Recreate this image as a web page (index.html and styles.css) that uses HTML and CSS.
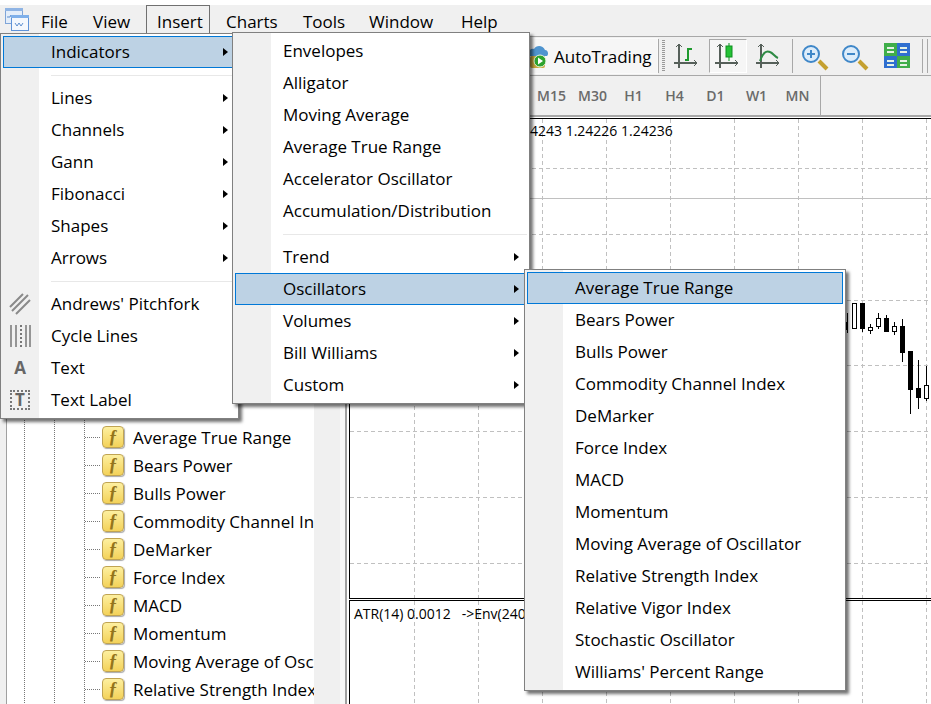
FILE: index.html
```html
<!DOCTYPE html>
<html lang="en">
  <head>
    <meta charset="UTF-8" />
    <title>MetaTrader</title>
    <link rel="stylesheet" href="styles.css">
  </head>

  <body>
    <div class="app">
      <div class="top-strip"></div>

      <div class="menubar">
        <svg class="app-icon" width="26" height="26" viewBox="0 0 26 26">
          <rect x="1.5" y="1.5" width="17" height="15" fill="#e4eefa" stroke="#7fa5d8"/>
          <rect x="1" y="1" width="18" height="3" fill="#8fb4e4"/>
          <path d="M3 10h3l1-2 2 4 1-2h4" fill="none" stroke="#5d8fd0"/>
          <rect x="7.5" y="8.5" width="17" height="15" fill="#f4f8fd" stroke="#5f93d8"/>
          <rect x="7" y="8" width="18" height="3" fill="#7fb0ea"/>
          <path d="M11 16l2 3 2-3 2 3 2-3" fill="none" stroke="#5d8fd0"/>
        </svg>
        <div class="menubar-item">File</div>
        <div class="menubar-item">View</div>
        <div class="menubar-item active">Insert</div>
        <div class="menubar-item">Charts</div>
        <div class="menubar-item">Tools</div>
        <div class="menubar-item">Window</div>
        <div class="menubar-item">Help</div>
      </div>

      <div class="toolbar toolbar-main">
        <div class="auto-trading">
          <svg class="auto-icon" width="22" height="28" viewBox="0 0 22 28">
            <path d="M1 14c-2-5 2-8 5-7 2-4 9-4 11 1 3 0 4 4 2 6z" fill="#4f94cf"/>
            <rect x="2" y="14" width="15" height="12" rx="2" fill="#c9a93f"/>
            <circle cx="12" cy="19" r="6" fill="#2ea32e" stroke="#e8f5e0"/>
            <path d="M10 15.5l5 3.5-5 3.5z" fill="#fff"/>
          </svg>
          <span>AutoTrading</span>
        </div>
        <div class="tool-sep"></div>
        <div class="grip"></div>

        <div class="tool-btn">
          <svg width="32" height="32" viewBox="0 0 32 32">
            <path d="M9 4v24M4 23h23" stroke="#56605a" stroke-width="2" fill="none"/>
            <path d="M6 7l3-3 3 3M24 20l3 3-3 3" stroke="#56605a" fill="none"/>
            <path d="M15 20h3V9h4" stroke="#1f9a2e" stroke-width="2" fill="none"/>
          </svg>
        </div>
        <div class="tool-btn pressed">
          <svg width="32" height="32" viewBox="0 0 32 32">
            <path d="M8 4v24M3 23h23" stroke="#56605a" stroke-width="2" fill="none"/>
            <path d="M5 7l3-3 3 3M23 20l3 3-3 3" stroke="#56605a" fill="none"/>
            <path d="M17 3v18" stroke="#0f8f20"/>
            <rect x="14" y="6" width="6" height="11" fill="#25c236" stroke="#0f8f20"/>
          </svg>
        </div>
        <div class="tool-btn">
          <svg width="32" height="32" viewBox="0 0 32 32">
            <path d="M9 4v24M4 23h23" stroke="#56605a" stroke-width="2" fill="none"/>
            <path d="M6 7l3-3 3 3M24 20l3 3-3 3" stroke="#56605a" fill="none"/>
            <path d="M8 21c3-8 6-11 10-9 3 1 5 5 8 6" stroke="#2e8b45" stroke-width="2" fill="none"/>
          </svg>
        </div>
        <div class="tool-sep spaced"></div>

        <div class="tool-btn">
          <svg width="32" height="32" viewBox="0 0 32 32">
            <path d="M20 21l8 8" stroke="#c4a030" stroke-width="4"/>
            <circle cx="12" cy="14" r="8" fill="#dcecfa" stroke="#3f87c8" stroke-width="2"/>
            <path d="M8 14h8M12 10v8" stroke="#3f87c8" stroke-width="2"/>
          </svg>
        </div>
        <div class="tool-btn">
          <svg width="32" height="32" viewBox="0 0 32 32">
            <path d="M20 21l8 8" stroke="#c4a030" stroke-width="4"/>
            <circle cx="12" cy="14" r="8" fill="#dcecfa" stroke="#3f87c8" stroke-width="2"/>
            <path d="M8 14h8" stroke="#3f87c8" stroke-width="2"/>
          </svg>
        </div>
        <div class="tool-btn tile-btn">
          <svg width="32" height="32" viewBox="0 0 32 32">
            <rect x="3" y="3" width="13" height="13" fill="#3fae4a"/>
            <rect x="16" y="3" width="13" height="13" fill="#2f6fd0"/>
            <rect x="3" y="16" width="13" height="12" fill="#2f6fd0"/>
            <rect x="16" y="16" width="13" height="12" fill="#3fae4a"/>
            <path d="M6 8h7M6 12h7M19 8h7M19 12h7M6 21h7M6 25h7M19 21h7M19 25h7" stroke="#e6f2e6" stroke-width="2"/>
          </svg>
        </div>
        <div class="tool-sep last"></div>
        <div class="tool-sep tail"></div>
      </div>

      <div class="toolbar toolbar-periods">
        <div class="period">M15</div>
        <div class="period">M30</div>
        <div class="period">H1</div>
        <div class="period">H4</div>
        <div class="period">D1</div>
        <div class="period">W1</div>
        <div class="period">MN</div>
        <div class="tool-sep tall"></div>
      </div>

      <div class="workspace">
        <div class="navigator">
          <div class="tree">
            <div class="tree-row"><span class="fn-icon">ƒ</span>Average True Range</div>
            <div class="tree-row"><span class="fn-icon">ƒ</span>Bears Power</div>
            <div class="tree-row"><span class="fn-icon">ƒ</span>Bulls Power</div>
            <div class="tree-row"><span class="fn-icon">ƒ</span>Commodity Channel Index</div>
            <div class="tree-row"><span class="fn-icon">ƒ</span>DeMarker</div>
            <div class="tree-row"><span class="fn-icon">ƒ</span>Force Index</div>
            <div class="tree-row"><span class="fn-icon">ƒ</span>MACD</div>
            <div class="tree-row"><span class="fn-icon">ƒ</span>Momentum</div>
            <div class="tree-row"><span class="fn-icon">ƒ</span>Moving Average of Oscillator</div>
            <div class="tree-row"><span class="fn-icon">ƒ</span>Relative Strength Index</div>
          </div>
          <div class="nav-side"></div>
          <div class="nav-edge"></div>
        </div>

        <div class="chart">
          <div class="pane pane-price">
            <svg class="pane-art" width="581" height="479" viewBox="350 120 581 479">
              <path class="grid" d="M414.5 120V599M478.5 120V599M542.5 120V599M606.5 120V599M670.5 120V599M734.5 120V599M798.5 120V599M862.5 120V599M926.5 120V599"/>
              <path class="grid" d="M350 169.5H931M350 235.5H931M350 301.5H931M350 366.5H931M350 432.5H931M350 498.5H931M350 564.5H931"/>
              <path d="M350 199.5H931" stroke="#c0c0c0" fill="none"/>
              <g class="candles">
                <path d="M847.5 314V334M862.5 304V333M870.5 325V335M878.5 314V330M886.5 316V333M894.5 323V336M902.5 320V363M910.5 352V415M918.5 361V410M926.5 367V402"/>
                <rect class="down" x="846" y="323" width="2" height="8"/>
                <rect class="up" x="852.5" y="304.5" width="4" height="25"/>
                <rect class="down" x="860" y="304" width="5" height="26"/>
                <rect class="up" x="868.5" y="328.5" width="4" height="3"/>
                <rect class="up" x="876.5" y="319.5" width="4" height="8"/>
                <rect class="down" x="884" y="319" width="5" height="14"/>
                <rect class="up" x="892.5" y="327.5" width="4" height="5"/>
                <rect class="down" x="900" y="327" width="5" height="27"/>
                <rect class="down" x="908" y="352" width="5" height="39"/>
                <rect class="down" x="916" y="389" width="5" height="10"/>
                <rect class="up" x="924.5" y="386.5" width="4" height="13"/>
              </g>
            </svg>
            <div class="chart-label price-label">4243 1.24226 1.24236</div>
          </div>
          <div class="pane pane-atr">
            <svg class="pane-art" width="581" height="102" viewBox="350 602 581 102">
              <path class="grid" d="M414.5 602V704M478.5 602V704M542.5 602V704M606.5 602V704M670.5 602V704M734.5 602V704M798.5 602V704M862.5 602V704M926.5 602V704"/>
            </svg>
            <div class="chart-label atr-label">ATR(14) 0.0012 &nbsp; -&gt;Env(240</div>
          </div>
        </div>
      </div>
    </div>

    <div class="menu menu-insert">
      <div class="item selected">Indicators<span class="arrow"></span></div>
      <div class="sep"></div>
      <div class="item">Lines<span class="arrow"></span></div>
      <div class="item">Channels<span class="arrow"></span></div>
      <div class="item">Gann<span class="arrow"></span></div>
      <div class="item">Fibonacci<span class="arrow"></span></div>
      <div class="item">Shapes<span class="arrow"></span></div>
      <div class="item">Arrows<span class="arrow"></span></div>
      <div class="sep"></div>
      <div class="item with-icon">
        <span class="gutter">
          <svg width="22" height="22" viewBox="0 0 22 22">
            <path d="M1 14L14 1M3 18L19 2M7 21L21 7" stroke="#8a8a8a" stroke-width="2" fill="none"/>
          </svg>
        </span>Andrews' Pitchfork
      </div>
      <div class="item with-icon">
        <span class="gutter">
          <svg width="22" height="24" viewBox="0 0 22 24">
            <path d="M2 1V23M7 1V23M17 1V23M21 1V23" stroke="#777" stroke-width="1.5" fill="none"/>
            <path d="M12 1V23" stroke="#777" stroke-width="2" stroke-dasharray="2 2" fill="none"/>
          </svg>
        </span>Cycle Lines
      </div>
      <div class="item with-icon">
        <span class="gutter"><span class="glyph-a">A</span></span>Text
      </div>
      <div class="item with-icon">
        <span class="gutter"><span class="glyph-t">T</span></span>Text Label
      </div>
    </div>

    <div class="menu menu-indicators">
      <div class="item">Envelopes</div>
      <div class="item">Alligator</div>
      <div class="item">Moving Average</div>
      <div class="item">Average True Range</div>
      <div class="item">Accelerator Oscillator</div>
      <div class="item">Accumulation/Distribution</div>
      <div class="sep"></div>
      <div class="item">Trend<span class="arrow"></span></div>
      <div class="item selected">Oscillators<span class="arrow"></span></div>
      <div class="item">Volumes<span class="arrow"></span></div>
      <div class="item">Bill Williams<span class="arrow"></span></div>
      <div class="item">Custom<span class="arrow"></span></div>
    </div>

    <div class="menu menu-oscillators">
      <div class="item selected">Average True Range</div>
      <div class="item">Bears Power</div>
      <div class="item">Bulls Power</div>
      <div class="item">Commodity Channel Index</div>
      <div class="item">DeMarker</div>
      <div class="item">Force Index</div>
      <div class="item">MACD</div>
      <div class="item">Momentum</div>
      <div class="item">Moving Average of Oscillator</div>
      <div class="item">Relative Strength Index</div>
      <div class="item">Relative Vigor Index</div>
      <div class="item">Stochastic Oscillator</div>
      <div class="item">Williams' Percent Range</div>
    </div>
  </body>
</html>
```

FILE: styles.css
```css
* {
  box-sizing: border-box;
}

html,
body {
  margin: 0;
  height: 100%;
  overflow: hidden;
}

body {
  font-family: "Open Sans", "Noto Sans", sans-serif;
  font-size: 17px;
  color: #000;
  background: #f0f0f0;
}

.app {
  height: 704px;
  display: flex;
  flex-direction: column;
}

.top-strip {
  height: 5px;
  background: #fff;
}

/* menu bar */
.menubar {
  height: 28px;
  display: grid;
  grid-template-columns: 26px 52px 64px 69px 77px 66px 92px 60px;
  padding-left: 4px;
}

.app-icon {
  margin-top: 2px;
}

.menubar-item {
  display: flex;
  align-items: center;
  padding: 3px 0 0 10px;
  border: 1px solid transparent;
  border-bottom: 0;
}

.menubar-item.active {
  width: 64px;
  border-color: #707070;
}

/* toolbars */
.toolbar {
  display: flex;
  align-items: center;
  overflow: hidden;
}

.toolbar-main {
  height: 40px;
  margin-top: 3px;
  padding-left: 530px;
  border-top: 1px solid #a8a8a8;
  border-bottom: 1px solid #a8a8a8;
}

.toolbar-periods {
  height: 41px;
  padding-left: 531px;
  border-bottom: 2px solid #a8a8a8;
}

.auto-trading {
  width: 128px;
  height: 36px;
  display: flex;
  align-items: center;
  background: #f6f6f6;
  border: 1px solid #fafafa;
}

.auto-icon {
  margin-left: -3px;
}

.auto-trading span {
  margin-left: 4px;
}

.tool-sep {
  width: 1px;
  height: 34px;
  background: #a8a8a8;
}

.tool-sep.spaced {
  margin: 0 2px 0 4px;
}

.tool-sep.last {
  margin-left: 5px;
}

.tool-sep.tail {
  margin-left: 4px;
}

.tool-sep.tall {
  height: 39px;
  margin-left: 2px;
}

.grip {
  width: 3px;
  height: 32px;
  margin: 0 1px 0 3px;
  background: linear-gradient(#999 50%, transparent 50%) 0 0 / 3px 2px;
}

.tool-btn {
  width: 40px;
  height: 34px;
  display: flex;
  align-items: center;
  justify-content: center;
}

.tool-btn.pressed {
  width: 38px;
  margin: 0 1px 0 3px;
  background: #f6f6f6;
  border: 1px solid #a8a8a8;
  border-right-color: #fff;
  border-bottom-color: #fff;
}

.tool-btn.tile-btn {
  margin-left: 2px;
}

.period {
  width: 41px;
  text-align: center;
  font-size: 14px;
  font-weight: 600;
  color: #6a6a6a;
}

/* navigator on the left */
.workspace {
  flex: 1;
  min-height: 0;
  display: flex;
}

.navigator {
  width: 349px;
  display: flex;
  padding: 0 2px 0 6px;
  margin-top: 1px;
  background: linear-gradient(to left, #fff 2px, transparent 2px);
}

.tree {
  width: 308px;
  padding-top: 305px;
  overflow: hidden;
  white-space: nowrap;
  border-left: 1px solid #a0a0a0;
  background-color: #fff;
  background-image:
    linear-gradient(#777 50%, transparent 50%),
    linear-gradient(#777 50%, transparent 50%),
    linear-gradient(#777 50%, transparent 50%);
  background-position: 17px 0, 47px 0, 77px 0;
  background-size: 1px 2px;
  background-repeat: repeat-y;
}

.tree-row {
  height: 28px;
  display: flex;
  align-items: center;
  padding-left: 78px;
}

.tree-row::before {
  content: "";
  flex: none;
  width: 16px;
  height: 1px;
  background: linear-gradient(to right, #777 50%, transparent 50%) 0 0 / 2px 1px;
}

.fn-icon {
  width: 22px;
  height: 22px;
  margin: 0 9px 0 1px;
  display: flex;
  align-items: center;
  justify-content: center;
  flex: none;
  font-family: "Liberation Serif", serif;
  font-size: 18px;
  font-weight: bold;
  font-style: italic;
  color: #94751c;
  background: linear-gradient(#fdf0a0, #f3d25a);
  border: 1px solid #c0a453;
  border-radius: 4px;
  box-shadow: 1px 1px 1px #aaa;
}

.nav-side {
  width: 26px;
  background: #f0f0f0;
}

.nav-edge {
  width: 7px;
  background: #f8f8f8;
  border-right: 2px solid #a0a0a0;
}

/* chart panes */
.chart {
  flex: 1;
  display: flex;
  flex-direction: column;
  gap: 1px;
  padding-top: 1px;
  background: #fff;
}

.pane {
  position: relative;
  border-left: 1px solid #000;
  border-top: 1px solid #000;
  overflow: hidden;
}

.pane-price {
  height: 481px;
  border-bottom: 1px solid #000;
}

.pane-atr {
  flex: 1;
}

.pane-art {
  position: absolute;
  left: 0;
  top: 0;
}

.grid {
  fill: none;
  stroke: #c0c0c0;
  stroke-dasharray: 4 3;
}

.candles path {
  stroke: #000;
  fill: none;
}

.candles .up {
  fill: #fff;
  stroke: #000;
}

.candles .down {
  fill: #000;
}

.chart-label {
  position: absolute;
  font-size: 14px;
  white-space: nowrap;
}

.price-label {
  left: 180px;
  top: 2px;
}

.atr-label {
  left: 4px;
  top: 3px;
}

/* open menus */
.menu {
  position: absolute;
  padding: 2px;
  background: linear-gradient(to right, #f0f0f0 38px, #fff 38px);
  border: 1px solid #808080;
  box-shadow: 3px 3px 3px rgba(0, 0, 0, 0.55);
  white-space: nowrap;
}

.menu-insert {
  left: 0;
  top: 33px;
  width: 239px;
  height: 386px;
  z-index: 1;
}

.menu-indicators {
  left: 232px;
  top: 32px;
  width: 298px;
  height: 372px;
  z-index: 2;
}

.menu-oscillators {
  left: 524px;
  top: 269px;
  width: 322px;
  height: 422px;
  z-index: 3;
}

.item {
  position: relative;
  height: 32px;
  display: flex;
  align-items: center;
  padding-left: 47px;
  padding-bottom: 1px;
  border: 1px solid transparent;
}

.item.with-icon {
  padding-left: 0;
}

.item.selected {
  background: #bdd2e4;
  border-color: #0078d7;
}

.sep {
  height: 1px;
  margin: 7px 0 6px 48px;
  background: #e8e8e8;
}

.arrow {
  margin-left: auto;
  margin-right: 7px;
  border-left: 5px solid #000;
  border-top: 4.5px solid transparent;
  border-bottom: 4.5px solid transparent;
}

.gutter {
  width: 47px;
  padding-left: 5px;
  display: flex;
  align-items: center;
  flex: none;
}

.glyph-a {
  width: 22px;
  text-align: center;
  font-size: 17px;
  font-weight: bold;
  color: #666;
}

.glyph-t {
  width: 20px;
  height: 20px;
  margin-left: 1px;
  display: flex;
  align-items: center;
  justify-content: center;
  font-size: 17px;
  font-weight: bold;
  color: #666;
  border: 2px dotted #777;
}
```
